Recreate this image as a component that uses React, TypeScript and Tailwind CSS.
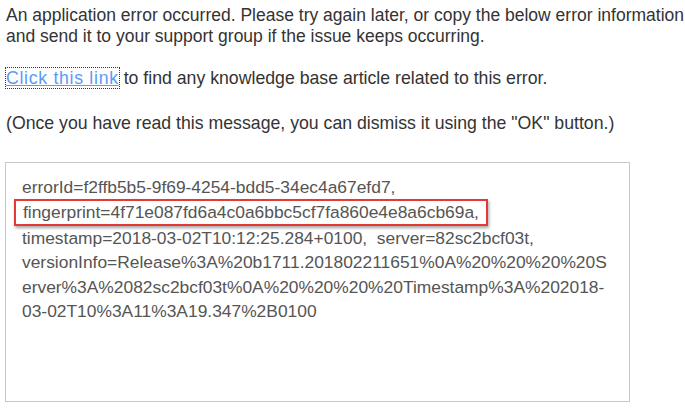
export default function App() {
  return (
    <div className="w-[685px] h-[408px] overflow-hidden bg-white text-[#333] font-['Liberation_Sans',Arial,sans-serif]">
      <div className="pl-[6px] pt-[5px] text-[17.5px] leading-[21px]">
        <p>
          An application error occurred. Please try again later, or copy the below error information and send it to
          your support group if the issue keeps occurring.
        </p>
        <p className="mt-[21px] text-[17.7px]">
          <a href="#" className="text-[#5a9bf6] underline tracking-[0.7px] outline-1 outline-dotted outline-[#333]">
            Click this link
          </a>{" "}
          to find any knowledge base article related to this error.
        </p>
        <p className="mt-[24px] text-[17.7px]">
          (Once you have read this message, you can dismiss it using the "OK" button.)
        </p>
      </div>

      <div className="ml-[5px] mt-[28px] w-[625px] h-[240px] border border-[#c8c8c8] pl-[16px] pt-[12px] pr-[10px] text-[17.4px] leading-[24.4px] text-[#555]">
        <p>errorId=f2ffb5b5-9f69-4254-bdd5-34ec4a67efd7,</p>
        <p className="-mx-[8px] w-fit px-[7px] border-2 border-[#e53935] shadow-[1px_2px_3px_rgba(0,0,0,0.35)] leading-[22.4px]">
          fingerprint=4f71e087fd6a4c0a6bbc5cf7fa860e4e8a6cb69a,
        </p>
        <p className="whitespace-pre">
          {"timestamp=2018-03-02T10:12:25.284+0100,  server=82sc2bcf03t,\n"}
          {"versionInfo=Release%3A%20b1711.201802211651%0A%20%20%20%20S\n"}
          {"erver%3A%2082sc2bcf03t%0A%20%20%20%20Timestamp%3A%202018-\n"}
          {"03-02T10%3A11%3A19.347%2B0100"}
        </p>
      </div>
    </div>
  );
}
